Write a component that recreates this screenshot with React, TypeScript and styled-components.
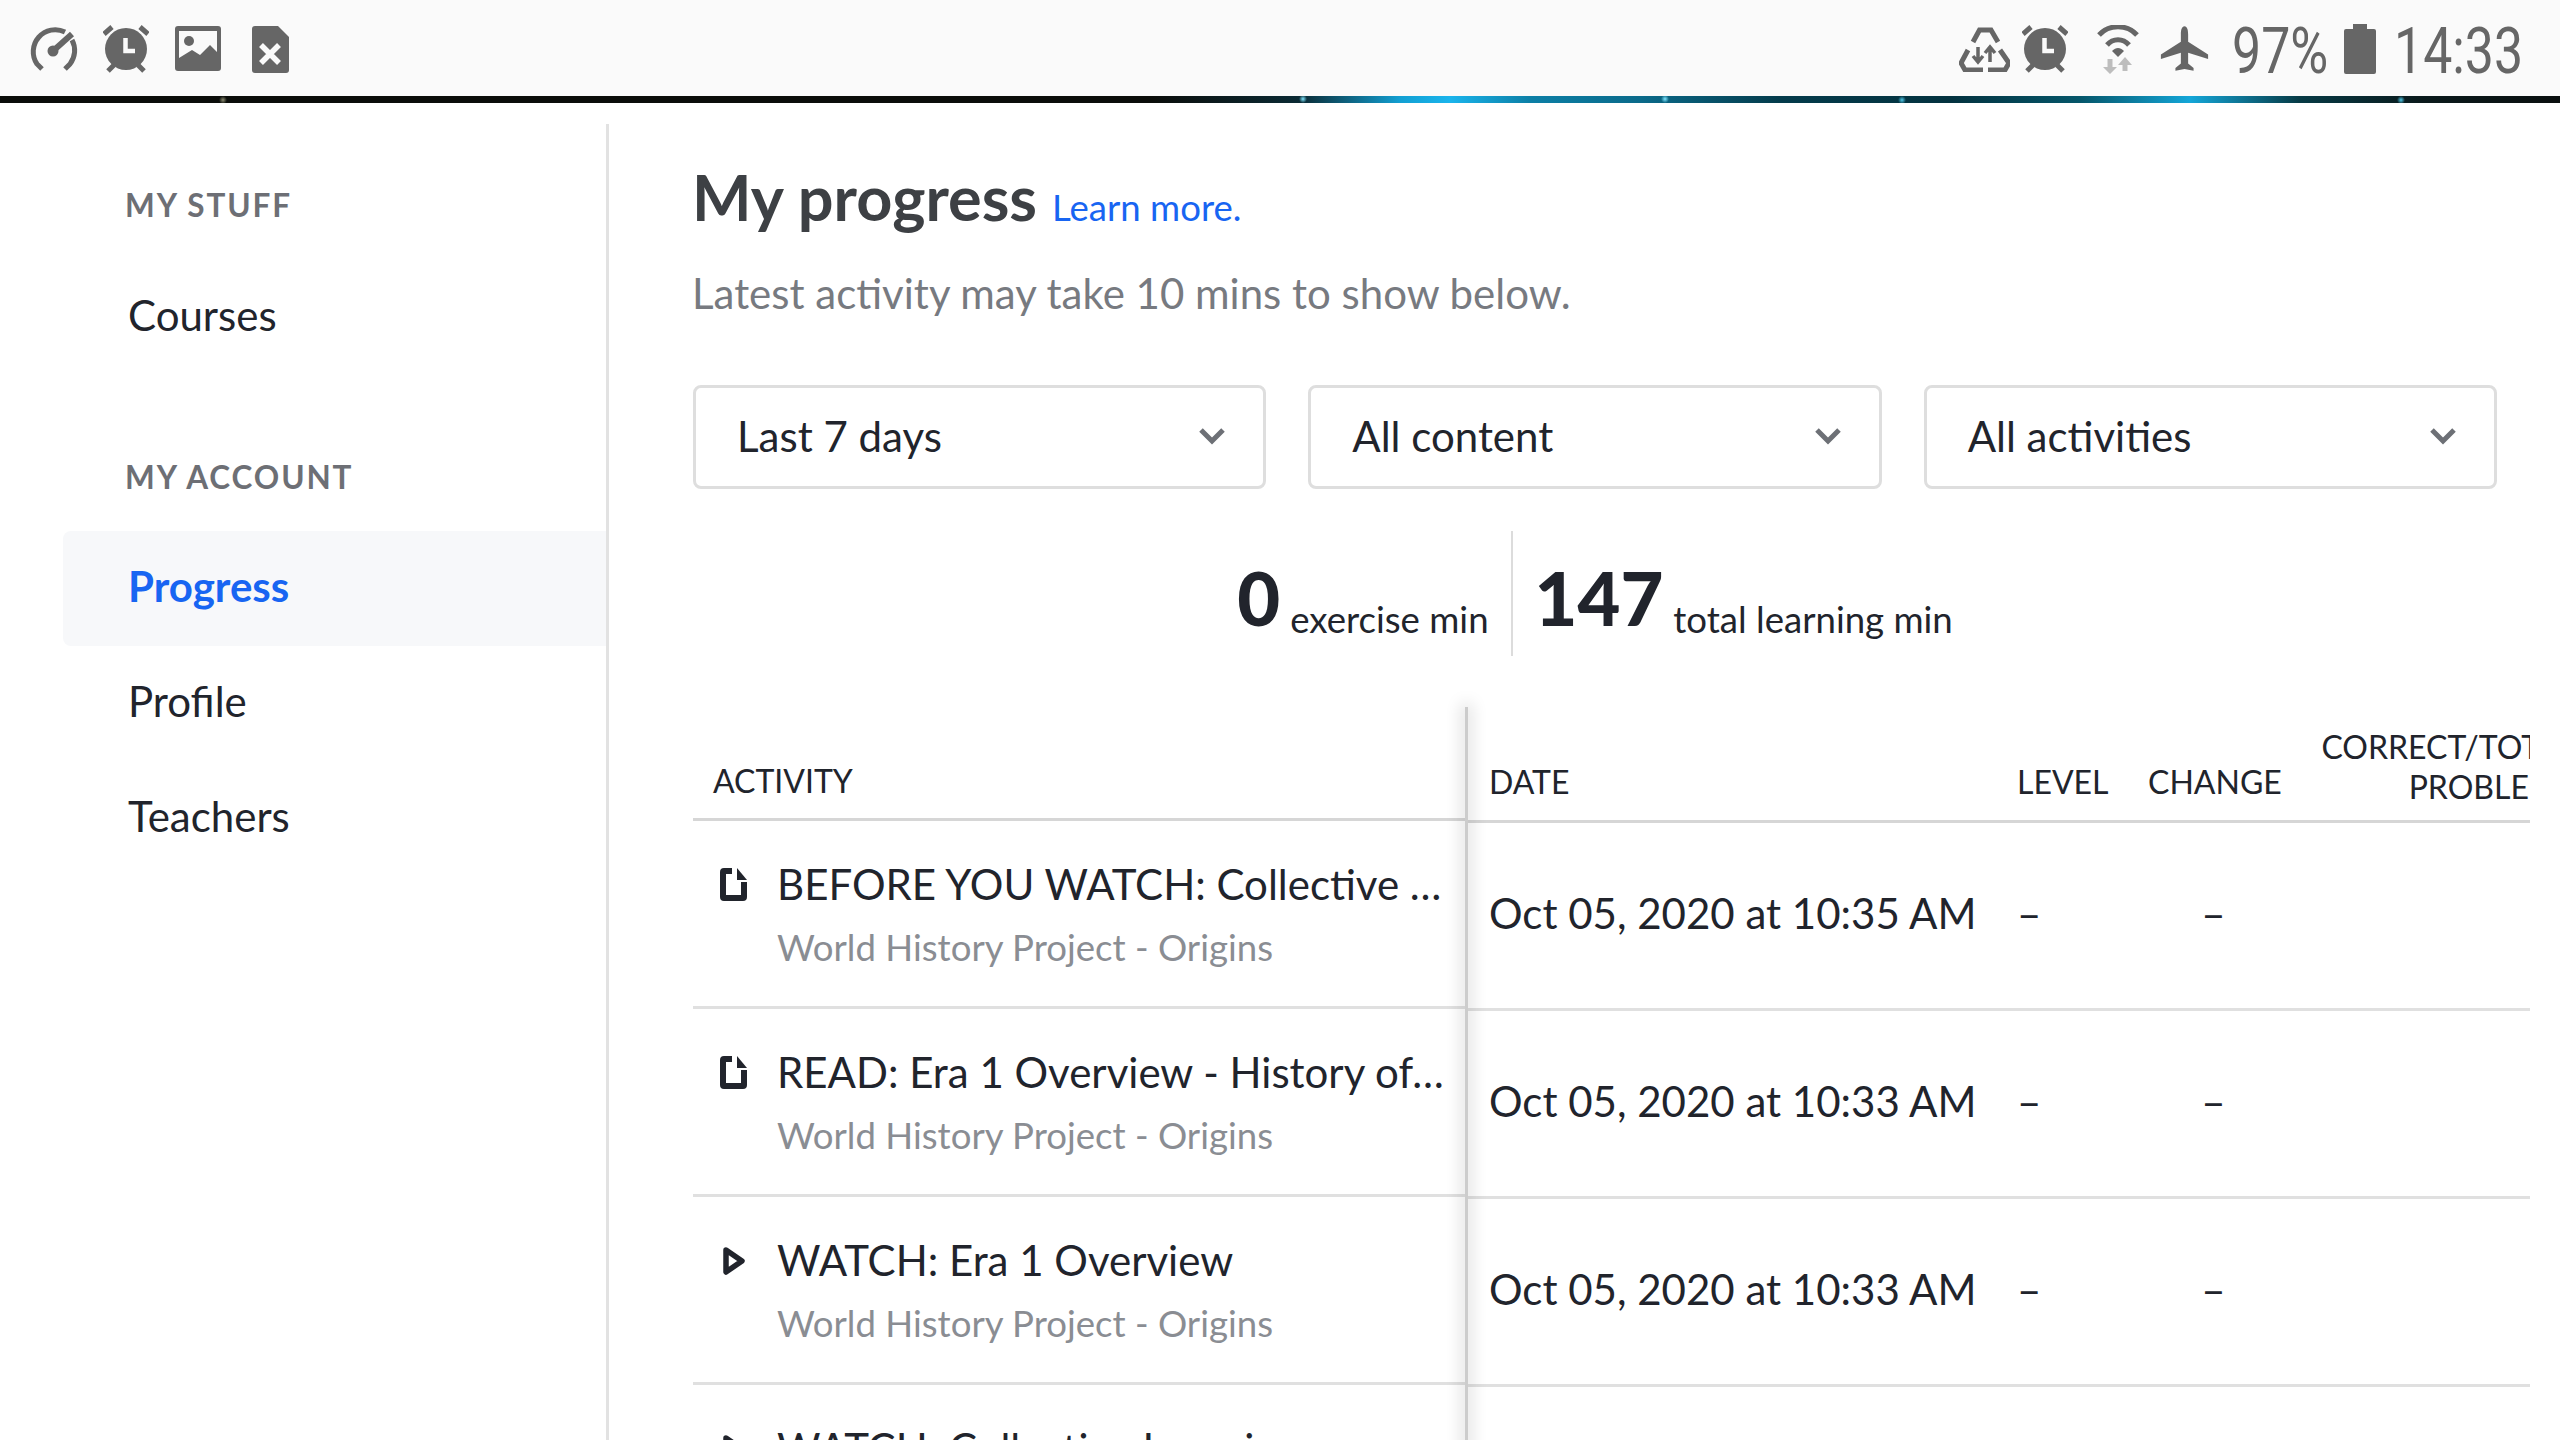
import React from "react";
import styled, { createGlobalStyle } from "styled-components";

const GlobalStyle = createGlobalStyle`
  html, body {
    margin: 0;
    height: 100%;
    overflow: hidden;
    background: #ffffff;
    font-family: Lato, "Liberation Sans", sans-serif;
    color: #21242c;
  }
`;

type Row = { kind: "doc" | "play"; title: string; date: string };

const rows: Row[] = [
  { kind: "doc", title: "BEFORE YOU WATCH: Collective …", date: "Oct 05, 2020 at 10:35 AM" },
  { kind: "doc", title: "READ: Era 1 Overview - History of…", date: "Oct 05, 2020 at 10:33 AM" },
  { kind: "play", title: "WATCH: Era 1 Overview", date: "Oct 05, 2020 at 10:33 AM" },
  { kind: "play", title: "WATCH: Collective Learning", date: "Oct 05, 2020 at 10:30 AM" },
];

const AlarmIcon = () => (
  <svg width="46" height="48" viewBox="0 0 46 48">
    <circle cx="23" cy="24" r="21" fill="#666" />
    <path d="M1 9 9 2M45 9 37 2M5 46l6-6M41 46l-6-6" stroke="#666" strokeWidth="5" fill="none" />
    <path d="M22.500 13v13H32" stroke="#fafafa" strokeWidth="4.500" fill="none" />
  </svg>
);

const DocIcon = () => (
  <svg width="27" height="33" viewBox="0 0 27 33">
    <path
      d="M12 0H4a4 4 0 0 0-4 4v25a4 4 0 0 0 4 4h19a4 4 0 0 0 4-4V14h-6v13H6V6h6z"
      fill="#21242c"
    />
    <path d="M17 0l10 12H17z" fill="#21242c" />
  </svg>
);

const PlayIcon = () => (
  <svg width="22" height="28" viewBox="0 0 22 28">
    <path d="M3 3 19 14 3 25z" fill="none" stroke="#21242c" strokeWidth="5.500" strokeLinejoin="round" />
  </svg>
);

const Chevron = () => (
  <svg width="28" height="18" viewBox="0 0 28 18">
    <path d="M3 3l11 11L25 3" fill="none" stroke="#6d7076" strokeWidth="5" />
  </svg>
);

export default function App() {
  return (
    <Page>
      <GlobalStyle />
      <StatusBar>
        <StatusGroup>
          <svg width="50" height="46" viewBox="0 0 50 46">
            <path d="M13 43 8 38A22 22 0 0 1 36 6M43 14a22 22 0 0 1-2 24l-5 5" fill="none" stroke="#666" strokeWidth="5" />
            <path d="M43 8 24 25" stroke="#666" strokeWidth="6" />
            <circle cx="24" cy="25" r="5.500" fill="#666" />
          </svg>
          <StatusSlot $ml={24}>
            <AlarmIcon />
          </StatusSlot>
          <StatusSlot $ml={26}>
            <svg width="46" height="46" viewBox="0 0 46 46">
              <rect width="46" height="45" rx="3" fill="#666" />
              <path d="M4 5h38v21l-7-7-10 10-8-5-13 8z" fill="#fafafa" />
              <circle cx="14" cy="15" r="5" fill="#666" />
            </svg>
          </StatusSlot>
          <StatusSlot $ml={31}>
            <svg width="37" height="47" viewBox="0 0 37 47">
              <path d="M3 0h23l11 11v33a3 3 0 0 1-3 3H3a3 3 0 0 1-3-3V3a3 3 0 0 1 3-3z" fill="#666" />
              <path d="M9 19 27 37M27 19 9 37" stroke="#fafafa" strokeWidth="5.500" />
            </svg>
          </StatusSlot>
        </StatusGroup>
        <StatusGroup>
          <svg width="51" height="46" viewBox="0 0 51 46">
            <path d="M14 16 20.500 4H32l7 12M9 24 2 37l4 7h18M29 44h17l4-7-9-13" fill="none" stroke="#666" strokeWidth="5" />
            <path d="M19 21v15M14 30l5 6 5-6M31 36V21M26 27l5-6 5 6" fill="none" stroke="#666" strokeWidth="3.500" />
          </svg>
          <StatusSlot $ml={12}>
            <AlarmIcon />
          </StatusSlot>
          <StatusSlot $ml={29}>
            <svg width="42" height="49" viewBox="0 0 42 49">
              <path d="M2 10C12-1 30-1 40 10M10 20c6-7 16-7 22 0" fill="none" stroke="#666" strokeWidth="5" />
              <path d="M15 26c4-4 8-4 12 0l-6 6z" fill="#666" />
              <path d="M10.500 34h5v8H20l-7 7-7-7h4.500zM25.500 46v-6H21l7-8 7 8h-4.500v6z" fill="#bdbdbd" />
            </svg>
          </StatusSlot>
          <StatusSlot $ml={21}>
            <svg width="49" height="50" viewBox="0 0 54 50">
              <path d="M27 0c3 0 4 4 4 9v8l22 14v5l-22-7v12l6 5v3l-10-2-10 2v-3l6-5V29L1 36v-5l22-14V9c0-5 1-9 4-9z" fill="#666" />
            </svg>
          </StatusSlot>
          <StatusSlot $ml={23}>
            <StatusText $width={95}>97%</StatusText>
          </StatusSlot>
          <StatusSlot $ml={17}>
            <svg width="32" height="50" viewBox="0 0 32 50">
              <path d="M9 0h14v5h7a2 2 0 0 1 2 2v41a2 2 0 0 1-2 2H2a2 2 0 0 1-2-2V7a2 2 0 0 1 2-2h7z" fill="#666" />
            </svg>
          </StatusSlot>
          <StatusSlot $ml={18}>
            <StatusText $width={128}>14:33</StatusText>
          </StatusSlot>
        </StatusGroup>
      </StatusBar>
      <Strip />
      <Body>
        <Sidebar>
          <SideHeading>MY STUFF</SideHeading>
          <SideItem>Courses</SideItem>
          <SideHeading $spaced>MY ACCOUNT</SideHeading>
          <SideItem $active>Progress</SideItem>
          <SideItem>Profile</SideItem>
          <SideItem>Teachers</SideItem>
        </Sidebar>
        <Main>
          <TitleRow>
            <Title>My progress</Title>
            <LearnMore>Learn more.</LearnMore>
          </TitleRow>
          <Subtitle>Latest activity may take 10 mins to show below.</Subtitle>
          <Filters>
            {["Last 7 days", "All content", "All activities"].map((label) => (
              <Filter key={label}>
                {label}
                <Chevron />
              </Filter>
            ))}
          </Filters>
          <Stats>
            <Stat>
              <StatValue>0</StatValue>
              <StatLabel>exercise min</StatLabel>
            </Stat>
            <StatDivider />
            <Stat>
              <StatValue>147</StatValue>
              <StatLabel>total learning min</StatLabel>
            </Stat>
          </Stats>
          <Table>
            <Frozen>
              <FrozenHead>ACTIVITY</FrozenHead>
              {rows.map((row) => (
                <FrozenRow key={row.title}>
                  <RowIcon>{row.kind === "doc" ? <DocIcon /> : <PlayIcon />}</RowIcon>
                  <RowText>
                    <RowTitle>{row.title}</RowTitle>
                    <RowSub>World History Project - Origins</RowSub>
                  </RowText>
                </FrozenRow>
              ))}
            </Frozen>
            <Scroller>
              <ScrollHead>
                <HeadCell>DATE</HeadCell>
                <HeadCell>LEVEL</HeadCell>
                <HeadCell>CHANGE</HeadCell>
                <HeadCell $right>
                  CORRECT/TOTAL
                  <br />
                  PROBLEMS
                </HeadCell>
              </ScrollHead>
              {rows.map((row) => (
                <ScrollRow key={row.title}>
                  <DateCell>{row.date}</DateCell>
                  <DashCell>–</DashCell>
                  <DashCell $center>–</DashCell>
                  <div />
                </ScrollRow>
              ))}
            </Scroller>
          </Table>
        </Main>
      </Body>
    </Page>
  );
}

const Page = styled.div`
  width: 2560px;
  height: 1440px;
  overflow: hidden;
  display: flex;
  flex-direction: column;
`;

const StatusBar = styled.div`
  height: 96px;
  flex: none;
  box-sizing: border-box;
  padding: 24px 38px 0 29px;
  background: #fafafa;
  display: flex;
  justify-content: space-between;
  align-items: flex-start;
`;

const StatusGroup = styled.div`
  height: 50px;
  display: flex;
  align-items: center;
`;

const StatusSlot = styled.div<{ $ml: number }>`
  margin-left: ${({ $ml }) => $ml}px;
  display: flex;
`;

const StatusText = styled.span<{ $width: number }>`
  display: block;
  width: ${({ $width }) => $width}px;
  padding-top: 6px;
  font-family: Roboto, "Liberation Sans", sans-serif;
  font-size: 64px;
  line-height: 50px;
  color: #666666;
  white-space: nowrap;
  transform: scaleX(0.81);
  transform-origin: left center;
`;

const Strip = styled.div`
  height: 7px;
  flex: none;
  background:
    radial-gradient(circle 4px at 223px 4px, #8a8a70, transparent),
    radial-gradient(circle 4px at 1303px 3px, #7fe6ff, transparent),
    radial-gradient(circle 4px at 1665px 3px, #7fe6ff, transparent),
    radial-gradient(circle 4px at 1902px 4px, #4fc8e8, transparent),
    radial-gradient(circle 4px at 2401px 4px, #4fc8e8, transparent),
    linear-gradient(
      90deg,
      #0b0d0a 0,
      #0b0d0a 1150px,
      #0a2a34 1300px,
      #129fd2 1400px,
      #1ab4ec 1450px,
      #0c7fa6 1530px,
      #0a6a8a 1640px,
      #043b4b 1780px,
      #03323f 1950px,
      #05566a 2080px,
      #14a6d8 2190px,
      #063a45 2300px,
      #0a1a1c 2420px,
      #0a0f0f 2560px
    );
`;

const Body = styled.div`
  flex: 1;
  min-height: 0;
  display: flex;
  padding-top: 21px;
`;

const Sidebar = styled.nav`
  width: 609px;
  flex: none;
  box-sizing: border-box;
  border-right: 3px solid #e2e2e2;
  padding: 61px 0 0 63px;
  display: flex;
  flex-direction: column;
`;

const SideHeading = styled.div<{ $spaced?: boolean }>`
  margin: ${({ $spaced }) => ($spaced ? "82px 0 34px 62px" : "0 0 35px 62px")};
  font-size: 31.500px;
  line-height: 40px;
  font-weight: 700;
  letter-spacing: 1.9px;
  color: #6d6f75;
`;

const SideItem = styled.div<{ $active?: boolean }>`
  height: 115px;
  box-sizing: border-box;
  padding: 0 0 6px 65px;
  display: flex;
  align-items: center;
  border-radius: 8px 0 0 8px;
  font-size: 42px;
  font-weight: ${({ $active }) => ($active ? 700 : 400)};
  color: ${({ $active }) => ($active ? "#1865f2" : "#21242c")};
  background: ${({ $active }) => ($active ? "#f7f8fa" : "transparent")};
`;

const Main = styled.main`
  flex: 1;
  min-width: 0;
  padding: 33px 63px 0 84px;
`;

const TitleRow = styled.div`
  display: flex;
  align-items: baseline;
  gap: 15px;
  margin-left: -1px;
`;

const Title = styled.h1`
  margin: 0;
  font-size: 63px;
  line-height: 80px;
  font-weight: 700;
  color: #3d4044;
`;

const LearnMore = styled.a`
  font-size: 36.600px;
  color: #1865f2;
`;

const Subtitle = styled.p`
  margin: 29px 0 0 -1px;
  font-size: 42px;
  line-height: 54px;
  color: #777a80;
`;

const Filters = styled.div`
  margin-top: 65px;
  display: flex;
  gap: 42px;
`;

const Filter = styled.div`
  flex: 1;
  height: 104px;
  box-sizing: border-box;
  padding: 0 37px 3px 41px;
  display: flex;
  justify-content: space-between;
  align-items: center;
  border: 3px solid #dedede;
  border-radius: 8px;
  font-size: 42px;
  color: #21242c;
`;

const Stats = styled.div`
  margin-top: 42px;
  display: flex;
  justify-content: center;
  gap: 22px;
`;

const Stat = styled.div`
  display: flex;
  align-items: flex-start;
  height: 125px;
  gap: 10px;
`;

const StatValue = styled.span`
  margin-top: 4px;
  font-size: 74px;
  line-height: 125px;
  font-weight: 900;
  color: #21242c;
`;

const StatLabel = styled.span`
  margin-top: 66px;
  font-size: 36.600px;
  line-height: 44px;
  color: #21242c;
`;

const StatDivider = styled.div`
  width: 2px;
  height: 125px;
  background: #dcdcdc;
`;

const Table = styled.div`
  margin-top: 51px;
  width: 1837px;
  display: flex;
`;

const Frozen = styled.div`
  width: 772px;
  flex: none;
  position: relative;
  z-index: 1;

  &::after {
    content: "";
    position: absolute;
    top: 0;
    bottom: 0;
    right: -3px;
    width: 3px;
    background: #cccccc;
    box-shadow: 0 0 16px 4px rgba(0, 0, 0, 0.13);
  }
`;

const FrozenHead = styled.div`
  height: 114px;
  box-sizing: border-box;
  padding: 0 0 17px 20px;
  display: flex;
  align-items: flex-end;
  border-bottom: 3px solid #d6d6d6;
  font-size: 32px;
  line-height: 40px;
  color: #21242c;
`;

const FrozenRow = styled.div`
  height: 188px;
  box-sizing: border-box;
  padding: 35px 0 0 27px;
  display: flex;
  gap: 30px;
  border-bottom: 3px solid #e0e0e0;
`;

const RowIcon = styled.div`
  width: 27px;
  height: 33px;
  flex: none;
  margin-top: 12px;
  display: flex;
  justify-content: center;
  align-items: center;
`;

const RowText = styled.div`
  min-width: 0;
  flex: 1;
`;

const RowTitle = styled.div`
  font-size: 42px;
  line-height: 56px;
  white-space: nowrap;
  color: #21242c;
`;

const RowSub = styled.div`
  margin-top: 10px;
  font-size: 36.600px;
  line-height: 50px;
  color: #8a8d93;
`;

const Scroller = styled.div`
  width: 1065px;
  flex: none;
  box-sizing: border-box;
  padding-left: 3px;
  overflow: hidden;
`;

const columns = "528px 131px 173px 276px";

const ScrollHead = styled.div`
  height: 116px;
  width: 1108px;
  box-sizing: border-box;
  display: grid;
  grid-template-columns: ${columns};
  align-items: end;
  padding-bottom: 18px;
  border-bottom: 3px solid #d6d6d6;
`;

const HeadCell = styled.div<{ $right?: boolean }>`
  padding-left: 21px;
  margin-bottom: ${({ $right }) => ($right ? "-5px" : "0")};
  font-size: 32px;
  line-height: 40px;
  white-space: nowrap;
  text-align: ${({ $right }) => ($right ? "right" : "left")};
  color: #21242c;
`;

const ScrollRow = styled.div`
  height: 188px;
  width: 1108px;
  box-sizing: border-box;
  padding-bottom: 5px;
  display: grid;
  grid-template-columns: ${columns};
  align-items: center;
  border-bottom: 3px solid #e0e0e0;
`;

const DateCell = styled.div`
  padding-left: 21px;
  font-size: 42px;
  color: #21242c;
  white-space: nowrap;
`;

const DashCell = styled.div<{ $center?: boolean }>`
  padding-left: ${({ $center }) => ($center ? "0" : "21px")};
  text-align: ${({ $center }) => ($center ? "center" : "left")};
  font-size: 42px;
  color: #21242c;
`;
